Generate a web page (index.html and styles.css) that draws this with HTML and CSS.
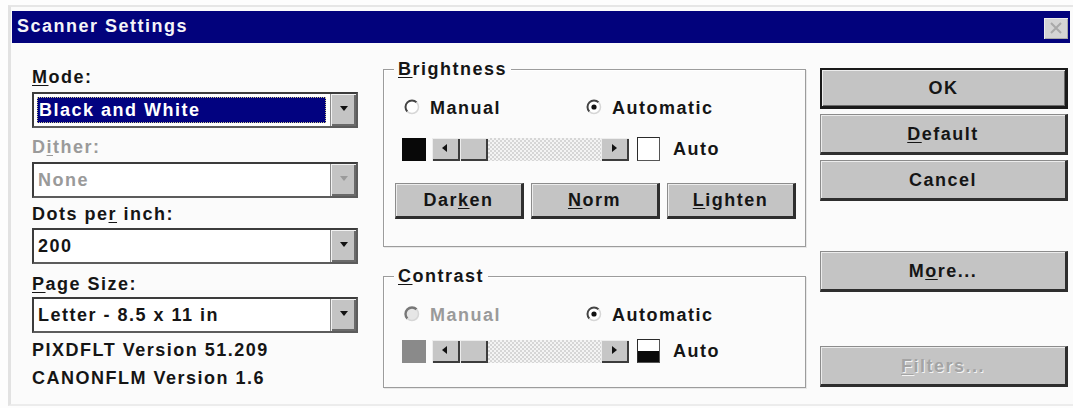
FILE: index.html
```html
<!DOCTYPE html>
<html lang="en">
<head>
<meta charset="utf-8">
<title>Scanner Settings</title>
<link rel="stylesheet" href="styles.css">
</head>
<body>
<div class="dialog">
  <div class="titlebar">
    <span class="title">Scanner Settings</span>
    <span class="close">
      <svg width="24" height="21" viewBox="0 0 24 21"><path d="M7 5 L17 15 M17 5 L7 15" stroke="#a9a9a9" stroke-width="2" fill="none"/></svg>
    </span>
  </div>

  <div class="content">
    <div class="col-left">
      <div class="label label-mode"><u>M</u>ode:</div>
      <div class="combo">
        <span class="value selected"><span class="focus">Black and White</span></span>
        <span class="drop"><svg width="10" height="6" viewBox="0 0 10 6"><path d="M1 0 H9 L5 5 Z" fill="#111"/></svg></span>
      </div>

      <div class="label label-dither disabled">D<u>i</u>ther:</div>
      <div class="combo combo-dither">
        <span class="value disabled">None</span>
        <span class="drop"><svg width="10" height="6" viewBox="0 0 10 6"><path d="M1 0 H9 L5 5 Z" fill="#9a9a9a"/></svg></span>
      </div>

      <div class="label label-dpi">Dots pe<u>r</u> inch:</div>
      <div class="combo combo-dpi">
        <span class="value">200</span>
        <span class="drop"><svg width="10" height="6" viewBox="0 0 10 6"><path d="M1 0 H9 L5 5 Z" fill="#111"/></svg></span>
      </div>

      <div class="label label-page"><u>P</u>age Size:</div>
      <div class="combo combo-page">
        <span class="value">Letter - 8.5 x 11 in</span>
        <span class="drop"><svg width="10" height="6" viewBox="0 0 10 6"><path d="M1 0 H9 L5 5 Z" fill="#111"/></svg></span>
      </div>

      <div class="version version-first">PIXDFLT Version 51.209</div>
      <div class="version">CANONFLM Version 1.6</div>
    </div>

    <div class="col-middle">
      <div class="group group-brightness">
        <span class="group-label"><u>B</u>rightness</span>
        <div class="radios">
          <span class="radio">
            <svg width="16" height="16" viewBox="0 0 16 16"><circle cx="8" cy="8" r="6.5" fill="#fff"/><path d="M3.4 12.6 A6.5 6.5 0 0 1 12.6 3.4" stroke="#444" stroke-width="2" fill="none"/><path d="M12.6 3.4 A6.5 6.5 0 0 1 3.4 12.6" stroke="#d6d6d6" stroke-width="1.5" fill="none"/></svg>
            Manual
          </span>
          <span class="radio">
            <svg width="16" height="16" viewBox="0 0 16 16"><circle cx="8" cy="8" r="6.5" fill="#fff"/><path d="M3.4 12.6 A6.5 6.5 0 0 1 12.6 3.4" stroke="#444" stroke-width="2" fill="none"/><path d="M12.6 3.4 A6.5 6.5 0 0 1 3.4 12.6" stroke="#d6d6d6" stroke-width="1.5" fill="none"/><circle cx="8" cy="8" r="2.6" fill="#111"/></svg>
            Automatic
          </span>
        </div>
        <div class="slider-row">
          <span class="swatch swatch-black"></span>
          <div class="scroll">
            <span class="arrow"><svg width="6" height="8" viewBox="0 0 6 8"><path d="M5 0 V8 L0 4 Z" fill="#111"/></svg></span>
            <span class="thumb"></span>
            <span class="track"></span>
            <span class="arrow"><svg width="6" height="8" viewBox="0 0 6 8"><path d="M1 0 V8 L6 4 Z" fill="#111"/></svg></span>
          </div>
          <span class="check"></span>
          <span class="auto">Auto</span>
        </div>
        <div class="btn-row">
          <span class="btn">Dar<u>k</u>en</span>
          <span class="btn"><u>N</u>orm</span>
          <span class="btn"><u>L</u>ighten</span>
        </div>
      </div>

      <div class="group group-contrast">
        <span class="group-label"><u>C</u>ontrast</span>
        <div class="radios">
          <span class="radio disabled">
            <svg width="16" height="16" viewBox="0 0 16 16"><circle cx="8" cy="8" r="6.5" fill="#e6e6e6"/><path d="M3.4 12.6 A6.5 6.5 0 0 1 12.6 3.4" stroke="#777" stroke-width="2.4" fill="none"/><path d="M12.6 3.4 A6.5 6.5 0 0 1 3.4 12.6" stroke="#d6d6d6" stroke-width="1.5" fill="none"/></svg>
            Manual
          </span>
          <span class="radio">
            <svg width="16" height="16" viewBox="0 0 16 16"><circle cx="8" cy="8" r="6.5" fill="#fff"/><path d="M3.4 12.6 A6.5 6.5 0 0 1 12.6 3.4" stroke="#444" stroke-width="2" fill="none"/><path d="M12.6 3.4 A6.5 6.5 0 0 1 3.4 12.6" stroke="#d6d6d6" stroke-width="1.5" fill="none"/><circle cx="8" cy="8" r="2.6" fill="#111"/></svg>
            Automatic
          </span>
        </div>
        <div class="slider-row">
          <span class="swatch swatch-gray"></span>
          <div class="scroll">
            <span class="arrow"><svg width="6" height="8" viewBox="0 0 6 8"><path d="M5 0 V8 L0 4 Z" fill="#111"/></svg></span>
            <span class="thumb"></span>
            <span class="track"></span>
            <span class="arrow"><svg width="6" height="8" viewBox="0 0 6 8"><path d="M1 0 V8 L6 4 Z" fill="#111"/></svg></span>
          </div>
          <span class="check check-half"></span>
          <span class="auto">Auto</span>
        </div>
      </div>
    </div>

    <div class="col-right">
      <span class="btn btn-side btn-default">OK</span>
      <span class="btn btn-side btn-gap"><u>D</u>efault</span>
      <span class="btn btn-side btn-gap">Cancel</span>
      <span class="btn btn-side btn-more">M<u>o</u>re...</span>
      <span class="btn btn-side btn-filters disabled"><u>F</u>ilters...</span>
    </div>
  </div>
</div>
</body>
</html>
```

FILE: styles.css
```css
* {
  box-sizing: border-box;
}

html, body {
  margin: 0;
  background: #fdfdfd;
}

body {
  font-family: "Liberation Sans", Arial, sans-serif;
  font-weight: bold;
  font-size: 18px;
  letter-spacing: 1.5px;
  color: #151515;
}

u {
  text-decoration: underline;
  text-underline-offset: 2px;
}

/* dialog frame */
.dialog {
  width: 1065px;
  height: 401px;
  margin: 5px 0 0 8px;
  border-top: 2px solid #e6e6e6;
  border-left: 3px solid #e2e2e2;
  border-bottom: 2px solid #ececec;
  padding: 4px 0 0 1px;
  background: #fbfbfb;
}

.titlebar {
  width: 1058px;
  height: 32px;
  background: #02027c;
  display: flex;
  align-items: center;
  justify-content: space-between;
  padding: 0 2px 0 5px;
}

.title {
  color: #f4f4f8;
  line-height: 24px;
  margin-top: -2px;
}

.close {
  width: 24px;
  height: 21px;
  margin-top: 2px;
  background: #d4d4d4;
  box-shadow: inset 1px 1px 0 #ececec, inset -1px -1px 0 #a8a8a8;
  display: flex;
}

/* three columns */
.content {
  display: flex;
  align-items: flex-start;
  padding: 22px 0 0 20px;
}

.col-left {
  width: 326px;
  display: flex;
  flex-direction: column;
}

.label {
  line-height: 24px;
  height: 24px;
}

.disabled {
  color: #9a9a9a;
}

.label-dither { margin-top: 7px; }
.label-dpi { margin-top: 4px; }
.label-page { margin-top: 8px; }

.combo {
  height: 36px;
  margin-top: 3px;
  display: flex;
  background: #fff;
  border: 2px solid #3c3c3c;
  border-right-color: #5c5c5c;
  border-bottom-color: #5c5c5c;
}

.combo-dpi { margin-top: 2px; }
.combo-page { margin-top: 1px; }

.value {
  flex: 1;
  display: flex;
  align-items: center;
  padding-left: 4px;
  line-height: 24px;
}

.value.selected {
  padding: 3px 4px 3px 3px;
}

.focus {
  flex: 1;
  height: 100%;
  display: flex;
  align-items: center;
  background: #020280;
  color: #fff;
  outline: 1px dotted #c9c48c;
  outline-offset: -1px;
  padding-left: 2px;
}

.drop {
  width: 26px;
  background: #c4c4c4;
  border-left: 1px solid #8a8a8a;
  box-shadow: inset 1px 1px 0 #f2f2f2, inset -2px -2px 0 #6a6a6a;
  display: flex;
  align-items: center;
  justify-content: center;
  padding-bottom: 2px;
}

.version {
  line-height: 28px;
}

.version-first {
  margin-top: 3px;
}

/* group boxes */
.col-middle {
  width: 423px;
  margin-left: 25px;
  margin-top: 4px;
  display: flex;
  flex-direction: column;
}

.group {
  position: relative;
  border: 1px solid #9c9c9c;
  box-shadow: inset 1px 1px 0 #ffffff, 1px 1px 0 #e8e8e8;
  padding-left: 11px;
}

.group-brightness {
  height: 178px;
  padding-top: 26px;
}

.group-contrast {
  height: 112px;
  margin-top: 29px;
  padding-top: 26px;
}

.group-label {
  position: absolute;
  top: -13px;
  left: 10px;
  padding: 0 4px 0 4px;
  line-height: 24px;
  background: #fbfbfb;
}

.radios {
  display: grid;
  grid-template-columns: 182px auto;
  margin-left: 9px;
  line-height: 24px;
}

.radio {
  display: flex;
  align-items: center;
  gap: 10px;
}

.radio svg {
  margin-top: -2px;
}

.slider-row {
  display: flex;
  align-items: center;
  margin-left: 7px;
  margin-top: 17px;
  height: 24px;
}

.group-contrast .slider-row {
  margin-top: 12px;
}

.swatch {
  width: 24px;
  height: 23px;
}

.swatch-black { background: #080808; }
.swatch-gray { background: #8a8a8a; }

.scroll {
  display: flex;
  width: 197px;
  height: 23px;
  margin-left: 6px;
}

.arrow,
.thumb {
  background: #c6c6c6;
  box-shadow: inset 1px 1px 0 #ededed, inset -2px -2px 0 #3c3c3c;
  display: flex;
  align-items: center;
  justify-content: center;
  padding: 0 2px 2px 0;
}

.arrow { width: 28px; }
.thumb { width: 28px; }

.track {
  flex: 1;
  background: repeating-conic-gradient(#d6d6d6 0 25%, #f4f4f4 0 50%) 0 0 / 4px 4px;
}

.check {
  width: 23px;
  height: 24px;
  margin-left: 8px;
  background: #fff;
  border: 1px solid #2a2a2a;
  border-right-color: #555;
  border-bottom-color: #555;
}

.check-half {
  background: linear-gradient(#fff 48%, #0a0a0a 48%);
}

.auto {
  margin-left: 13px;
  line-height: 24px;
}

.btn-row {
  display: flex;
  gap: 7px;
  margin-top: 22px;
}

/* push buttons */
.btn {
  height: 36px;
  display: flex;
  align-items: center;
  justify-content: center;
  background: #c4c4c4;
  border: 1px solid #8c8c8c;
  border-right: 3px solid #2e2e2e;
  border-bottom: 3px solid #2e2e2e;
  box-shadow: inset 1px 1px 0 #ececec;
  line-height: 24px;
}

.btn-row .btn {
  width: 129px;
}

.col-right {
  width: 248px;
  margin-left: 14px;
  margin-top: 3px;
  display: flex;
  flex-direction: column;
}

.btn-side {
  height: 41px;
}

.btn-default {
  border: 2px solid #1a1a1a;
  border-right-width: 3px;
  border-bottom-width: 3px;
  box-shadow: inset 1px 1px 0 #ececec, inset -1px -1px 0 #6a6a6a;
}

.btn-gap { margin-top: 5px; }
.btn-more { margin-top: 50px; }
.btn-filters { margin-top: 54px; }

.btn.disabled {
  color: #a4a4a4;
  text-shadow: 1px 1px 0 #f4f4f4;
}
```
